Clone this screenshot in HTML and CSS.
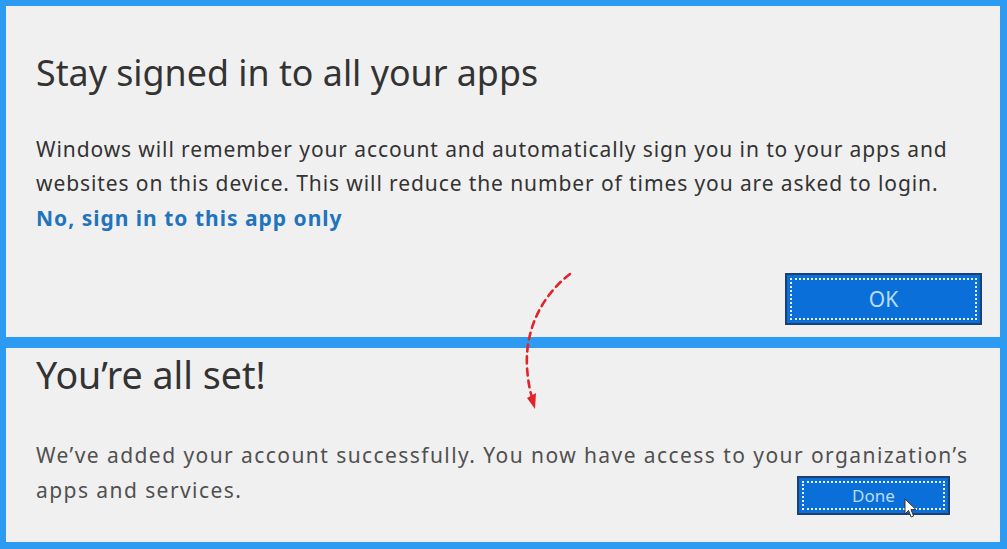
FILE: index.html
```html
<!DOCTYPE html>
<html lang="en">
<head>
<meta charset="utf-8">
<title>Stay signed in</title>
<link rel="stylesheet" href="styles.css">
</head>
<body>
<div class="frame">
  <section class="panel panel-top">
    <h1 class="title">Stay signed in to all your apps</h1>
    <p class="desc">Windows will remember your account and automatically sign you in to your apps and<br>websites on this device. This will reduce the number of times you are asked to login.</p>
    <a class="link" href="#">No, sign in to this app only</a>
    <div class="actions">
      <button class="btn btn-ok"><span class="focus">OK</span></button>
    </div>
  </section>
  <section class="panel panel-bottom">
    <h2 class="title-set">You’re all set!</h2>
    <div class="bottom-grid">
      <p class="desc2">We’ve added your account successfully. You now have access to your organization’s<br>apps and services.</p>
      <button class="btn btn-done"><span class="focus">Done</span>
        <svg class="cursor" width="14" height="21" viewBox="0 0 14 21"><path d="M1 1 L1 16 L4.5 12.5 L7.2 19 L9.6 18 L7 11.6 L12 11.6 Z" fill="#fff" stroke="#333" stroke-width="1" stroke-linejoin="round"/></svg>
      </button>
    </div>
  </section>
  <svg class="arrow" width="80" height="150" viewBox="0 0 80 150">
    <path d="M70 12 C 40 35, 25 70, 27 105 C 28 120, 30 130, 33 138" fill="none" stroke="#e0242a" stroke-width="2.6" stroke-dasharray="7 5" stroke-linecap="round"/>
    <path d="M27 136 L36 131 L35 147 Z" fill="#e0242a"/>
  </svg>
</div>
</body>
</html>
```

FILE: styles.css
```css
* { box-sizing: border-box; }
html, body { margin: 0; padding: 0; }
body {
  background: #2e9bf2;
  width: 1007px;
  height: 549px;
  overflow: hidden;
  font-family: "Noto Sans", "Open Sans", sans-serif;
}
.frame {
  position: relative;
  padding: 6px 7px 7px 6px;
  display: flex;
  flex-direction: column;
  gap: 11px;
  height: 549px;
}
.panel {
  background: #f0f0f0;
  padding: 0 18px 0 30px;
}
.panel-top {
  height: 331px;
  display: flex;
  flex-direction: column;
  align-items: flex-start;
}
.title {
  margin: 44px 0 0 0;
  font-size: 35.8px;
  line-height: 44px;
  font-weight: 400;
  color: #333;
  white-space: nowrap;
}
.desc {
  margin: 38px 0 0 0;
  font-size: 21px;
  letter-spacing: 0.9px;
  line-height: 34px;
  color: #333;
  white-space: nowrap;
}
.link {
  margin-top: 1px;
  font-size: 21px;
  letter-spacing: 1px;
  line-height: 34px;
  font-weight: 700;
  color: #1f74bd;
  text-decoration: none;
  white-space: nowrap;
}
.actions {
  align-self: stretch;
  margin-top: auto;
  margin-bottom: 12px;
  display: flex;
  justify-content: flex-end;
}
.btn {
  position: relative;
  border: 2px solid #1d3f73;
  background: #0b6fd9;
  padding: 3px;
  font-family: inherit;
  cursor: default;
}
.focus {
  display: flex;
  align-items: center;
  justify-content: center;
  width: 100%;
  height: 100%;
  border: 2px dotted #e8f3ff;
  color: #b8dcff;
}
.btn-ok {
  width: 197px;
  height: 52px;
  font-size: 21px;
}
.panel-bottom {
  flex: 1;
  display: flex;
  flex-direction: column;
}
.title-set {
  margin: 4px 0 0 0;
  font-size: 37.6px;
  line-height: 46px;
  font-weight: 400;
  color: #333;
  white-space: nowrap;
}
.bottom-grid {
  display: grid;
  margin-top: 40px;
}
.desc2 {
  grid-area: 1 / 1;
  margin: 0;
  font-size: 21px;
  letter-spacing: 1.43px;
  line-height: 35px;
  color: #505050;
  white-space: nowrap;
}
.btn-done {
  grid-area: 1 / 1;
  justify-self: end;
  align-self: end;
  margin-right: 32px;
  margin-bottom: -7px;
  width: 153px;
  height: 39px;
  font-size: 17px;
}
.cursor {
  position: absolute;
  left: 105px;
  top: 20px;
}
.arrow {
  position: absolute;
  left: 500px;
  top: 262px;
}
```
